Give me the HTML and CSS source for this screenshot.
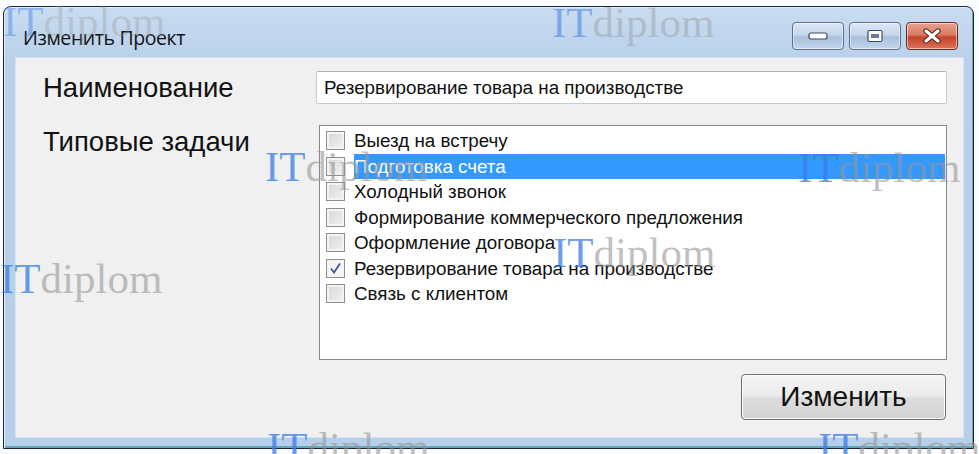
FILE: index.html
```html
<!DOCTYPE html>
<html lang="ru">
<head>
    <meta charset="UTF-8">
    <meta name="viewport" content="width=device-width, initial-scale=1.0">
    <title>Изменить Проект</title>
    <link rel="stylesheet" href="styles.css">
</head>
<body>
    <div class="window">
        <div class="titlebar">
            <span class="title">Изменить Проект</span>
            <div class="caption-buttons">
                <button class="cap" type="button">
                    <svg width="22" height="10" viewBox="0 0 22 10">
                        <rect x="2" y="2" width="18" height="6" rx="2" fill="#fff" stroke="#3b4a5c" stroke-width="1.2"/>
                    </svg>
                </button>
                <button class="cap" type="button">
                    <svg width="18" height="14" viewBox="0 0 18 14">
                        <rect x="2" y="1.5" width="14" height="11" rx="1.5" fill="#fff" stroke="#3b4a5c" stroke-width="1.2"/>
                        <rect x="5" y="5" width="8" height="4" fill="#6a7c92"/>
                    </svg>
                </button>
                <button class="cap cap-close" type="button">
                    <svg width="22" height="16" viewBox="0 0 22 16">
                        <path d="M5 3 L17 13 M17 3 L5 13" stroke="#5a2418" stroke-width="5.4" stroke-linecap="round"/>
                        <path d="M5 3 L17 13 M17 3 L5 13" stroke="#fff" stroke-width="3.2" stroke-linecap="round"/>
                    </svg>
                </button>
            </div>
        </div>

        <div class="client">
            <div class="form-grid">
                <label class="field-label" for="name">Наименование</label>
                <input class="textbox" id="name" type="text" value="Резервирование товара на производстве">

                <label class="field-label">Типовые задачи</label>
                <div class="checklist">
                    <div class="item"><span class="check"></span><span class="item-text">Выезд на встречу</span></div>
                    <div class="item selected"><span class="check"></span><span class="item-text">Подготовка счета</span></div>
                    <div class="item"><span class="check"></span><span class="item-text">Холодный звонок</span></div>
                    <div class="item"><span class="check"></span><span class="item-text">Формирование коммерческого предложения</span></div>
                    <div class="item"><span class="check"></span><span class="item-text">Оформление договора</span></div>
                    <div class="item">
                        <span class="check checked">
                            <svg width="13" height="13" viewBox="0 0 13 13">
                                <path d="M2 6.5 L5 10.5 L11 1.5" fill="none" stroke="#3a4f8c" stroke-width="1.6"/>
                            </svg>
                        </span>
                        <span class="item-text">Резервирование товара на производстве</span>
                    </div>
                    <div class="item"><span class="check"></span><span class="item-text">Связь с клиентом</span></div>
                </div>
            </div>

            <div class="actions">
                <button class="btn" type="button">Изменить</button>
            </div>
        </div>
    </div>

    <!-- site watermark stamped over the screenshot -->
    <div class="wm wm-1"><span class="wm-it">IT</span>diplom</div>
    <div class="wm wm-2"><span class="wm-it">IT</span>diplom</div>
    <div class="wm wm-3"><span class="wm-it">IT</span>diplom</div>
    <div class="wm wm-4"><span class="wm-it">IT</span>diplom</div>
    <div class="wm wm-5"><span class="wm-it">IT</span>diplom</div>
    <div class="wm wm-6"><span class="wm-it">IT</span>diplom</div>
    <div class="wm wm-7"><span class="wm-it">IT</span>diplom</div>
    <div class="wm wm-8"><span class="wm-it">IT</span>diplom</div>
</body>
</html>
```

FILE: styles.css
```css
* {
    box-sizing: border-box;
    margin: 0;
    padding: 0;
}

body {
    position: relative;
    width: 979px;
    height: 454px;
    overflow: hidden;
    background-color: #fbfcfd;
    font-family: "Liberation Sans", Arial, sans-serif;
}

/* Window frame */
.window {
    display: flex;
    flex-direction: column;
    width: 971px;
    height: 443px;
    margin: 6px 0 0 3px;
    padding: 0 9px 10px 11px;
    border: 1px solid #1d2733;
    border-radius: 8px 8px 0 0;
    background: linear-gradient(to bottom, #c9dcf1 0px, #b9d1ea 50px, #b6cfea 100%);
    box-shadow: inset 1px 1px 0 #e3eefa, inset -1px -2px 0 #5fa9b9;
}

.titlebar {
    display: flex;
    align-items: flex-start;
    justify-content: space-between;
    height: 50px;
}

.title {
    margin: 17px 0 0 8px;
    font-family: "Open Sans", "DejaVu Sans", sans-serif;
    font-size: 19.5px;
    letter-spacing: -0.4px;
    color: #111;
}

.caption-buttons {
    display: flex;
    gap: 5px;
    margin: 15px 6px 0 0;
}

.cap {
    display: flex;
    align-items: center;
    justify-content: center;
    width: 52px;
    height: 28px;
    border: 1px solid #5d6f86;
    border-radius: 4px;
    background: linear-gradient(to bottom, #dbe7f5 0%, #c4d6ec 45%, #a9c0dd 55%, #c2d6ee 100%);
    box-shadow: inset 0 0 0 1px rgba(255, 255, 255, 0.55);
}

.cap-close {
    border-color: #6b2a1e;
    background: linear-gradient(to bottom, #e8a392 0%, #d97a62 45%, #c5432a 55%, #d9745a 100%);
}

/* Dialog body */
.client {
    display: flex;
    flex-direction: column;
    flex: 1;
    background-color: #f0f0f0;
    border: 1px solid #d7e3f1;
    padding: 13px 16px 0 27px;
}

.form-grid {
    display: grid;
    grid-template-columns: 273px 631px;
    grid-template-rows: 33px 235px;
    row-gap: 21px;
}

.field-label {
    font-size: 27.5px;
    color: #111;
    line-height: 33px;
}

.textbox {
    width: 631px;
    height: 33px;
    padding: 0 7px;
    border: 1px solid #c6ccd4;
    border-top-color: #abb2bb;
    border-radius: 2px;
    background-color: #fff;
    font-family: "Liberation Sans", Arial, sans-serif;
    font-size: 18.8px;
    color: #111;
}

.checklist {
    margin-left: 3px;
    padding: 2px 1px;
    border: 1px solid #828790;
    background-color: #fff;
}

.item {
    display: flex;
    align-items: center;
    height: 25.5px;
    font-size: 18.8px;
    color: #111;
}

.check {
    display: flex;
    align-items: center;
    justify-content: center;
    flex: none;
    width: 19px;
    height: 19px;
    margin: 0 9px 0 5px;
    border: 1px solid #8f8f8f;
    background: linear-gradient(135deg, #d6d6d6 0%, #f2f2f2 100%);
    box-shadow: inset 0 0 0 2px #f4f4f4;
}

.check.checked {
    background: #f4f4f4;
}

.item-text {
    flex: 1;
    height: 100%;
    line-height: 25.5px;
}

.selected .item-text {
    background-color: #3399ff;
    color: #fff;
}

.actions {
    display: flex;
    justify-content: flex-end;
    margin: 14px 1px 0 0;
}

.btn {
    width: 205px;
    height: 46px;
    border: 1px solid #707070;
    border-radius: 4px;
    background: linear-gradient(to bottom, #f4f4f4 0%, #ebebeb 48%, #dddddd 52%, #d2d2d2 100%);
    box-shadow: inset 0 0 0 1px #fbfbfb;
    font-family: "Liberation Sans", Arial, sans-serif;
    font-size: 28px;
    color: #111;
}

/* Watermark */
.wm {
    position: absolute;
    font-family: "Liberation Serif", "Times New Roman", serif;
    font-size: 43px;
    line-height: 1;
    color: rgba(150, 150, 150, 0.6);
    white-space: nowrap;
    pointer-events: none;
}

.wm-it {
    color: rgba(58, 125, 230, 0.75);
}

.wm-1 { left: 3px; top: 0; opacity: 0.55; }
.wm-2 { left: 552px; top: 1px; opacity: 0.7; }
.wm-3 { left: 265px; top: 145px; }
.wm-4 { left: 798px; top: 146px; }
.wm-5 { left: 0; top: 257px; }
.wm-6 { left: 553px; top: 231px; }
.wm-7 { left: 267px; top: 426px; }
.wm-8 { left: 818px; top: 426px; }
```
